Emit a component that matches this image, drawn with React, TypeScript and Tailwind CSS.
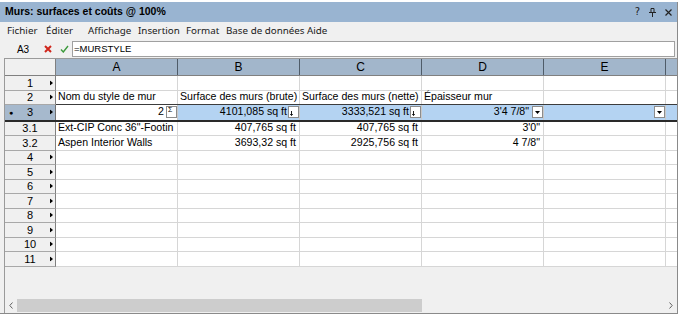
import React from "react";

type Row = {
  label: string;
  arrow: boolean;
  cells: string[];
  header?: boolean;
};

const ROWS: Row[] = [
  { label: "1", arrow: true, cells: ["", "", "", "", ""] },
  {
    label: "2",
    arrow: true,
    header: true,
    cells: ["Nom du style de mur", "Surface des murs (brute)", "Surface des murs (nette)", "Épaisseur mur", ""],
  },
  { label: "3", arrow: true, cells: [] },
  { label: "3.1", arrow: false, cells: ['Ext-CIP Conc 36"-Footin', "407,765 sq ft", "407,765 sq ft", "3'0\"", ""] },
  { label: "3.2", arrow: false, cells: ["Aspen Interior Walls", "3693,32 sq ft", "2925,756 sq ft", '4 7/8"', ""] },
  ...["4", "5", "6", "7", "8", "9", "10", "11"].map((n) => ({ label: n, arrow: true, cells: ["", "", "", "", ""] })),
];

const MENU = [
  { label: "Fichier", w: "w-[39px]" },
  { label: "Éditer", w: "w-[42px]" },
  { label: "Affichage", w: "w-[50px]" },
  { label: "Insertion", w: "w-[48px]" },
  { label: "Format", w: "w-[40px]" },
  { label: "Base de données", w: "w-[81px]" },
  { label: "Aide", w: "w-[30px]" },
];

function RowArrow() {
  return (
    <svg width="3" height="5" viewBox="0 0 3 5" className="absolute right-[2px] top-1/2 -translate-y-1/2">
      <path d="M0 0 L3 2.5 L0 5 Z" fill="#000" />
    </svg>
  );
}

function DropBox() {
  return (
    <div className="w-[11px] h-[12px] bg-white border border-[#8c8c8c] flex items-center justify-center shrink-0">
      <svg width="5" height="3" viewBox="0 0 5 3">
        <path d="M0 0 H5 L2.5 3 Z" fill="#000" />
      </svg>
    </div>
  );
}

function SumBox({ glyph }: { glyph: "sigma" | "down" }) {
  return (
    <div className="w-[11px] h-[12px] bg-white border border-[#8c8c8c] relative shrink-0">
      {glyph === "sigma" ? (
        <span className="absolute left-[1px] top-[-1px] text-[7px] leading-none">Σ</span>
      ) : (
        <svg width="3" height="5" viewBox="0 0 3 5" className="absolute left-[1px] bottom-[1px]">
          <path d="M1.5 0 V4 M0.3 3 L1.5 4.6 L2.7 3" stroke="#000" strokeWidth="0.9" fill="none" />
        </svg>
      )}
    </div>
  );
}

function SummaryRow() {
  return (
    <div className="flex h-[14.5px] border-t border-[#3c3c3c] border-b-2 border-b-[#2a2a2a] box-content -mt-px text-[10.6px]">
      <div className="w-[51px] shrink-0 relative bg-[#a6b9cd] border-r border-[#707070] flex items-center justify-center text-[11px]">
        <span className="absolute left-[4px] top-1/2 -translate-y-1/2 text-[7px] leading-none">●</span>
        3
        <RowArrow />
      </div>
      <div className="w-[122px] shrink-0 bg-white border-r border-[#c8c8c8] flex items-center justify-end gap-[2px]">
        <span>2</span>
        <SumBox glyph="sigma" />
      </div>
      <div className="w-[122px] shrink-0 bg-[#b4d3f2] border-r border-[#c8c8c8] flex items-center justify-end gap-[1px]">
        <span>4101,085 sq ft</span>
        <SumBox glyph="down" />
      </div>
      <div className="w-[122px] shrink-0 bg-[#b4d3f2] border-r border-[#c8c8c8] flex items-center justify-end gap-[1px]">
        <span>3333,521 sq ft</span>
        <SumBox glyph="down" />
      </div>
      <div className="w-[122px] shrink-0 bg-[#b4d3f2] border-r border-[#c8c8c8] flex items-center justify-end gap-[3px]">
        <span>3'4 7/8"</span>
        <DropBox />
      </div>
      <div className="w-[122px] shrink-0 bg-[#b4d3f2] border-r border-[#c8c8c8] flex items-center justify-end">
        <DropBox />
      </div>
      <div className="flex-1 bg-[#b4d3f2]" />
    </div>
  );
}

function DataRow({ row }: { row: Row }) {
  return (
    <div className="flex h-[14.5px] border-b border-[#d6d6d6]">
      <div className="w-[51px] shrink-0 relative bg-[#f0f0f0] border-r border-[#808080] border-b border-b-[#a8a8a8] -mb-px flex items-center justify-center text-[11px]">
        {row.label}
        {row.arrow && <RowArrow />}
      </div>
      {[0, 1, 2, 3, 4].map((i) => {
        const text = row.cells[i] ?? "";
        const left = row.header || i === 0;
        return (
          <div
            key={i}
            className={`w-[122px] shrink-0 bg-white border-r border-[#d6d6d6] flex items-center whitespace-nowrap text-[10.6px] ${
              left ? "justify-start pl-[2px]" : "justify-end pr-[3px]"
            }`}
          >
            {text}
          </div>
        );
      })}
      <div className="flex-1 bg-white" />
    </div>
  );
}

export default function App() {
  return (
    <div className="w-[680px] h-[317px] bg-white pt-[2px] pr-[2px] pb-[3px] font-['Liberation_Sans',Arial,sans-serif] text-black overflow-hidden">
      <div className="h-full flex flex-col bg-[#f0f0f0] border-r border-b border-[#8a8a8a]">
        {/* Title bar */}
        <div className="h-[20px] shrink-0 bg-[#99b4d1] flex items-center justify-between pl-[5px] pr-[5px]">
          <span className="font-bold text-[10.5px]">Murs: surfaces et coûts @ 100%</span>
          <div className="flex items-center gap-[9px] text-[#222]">
            <span className="text-[10px] leading-none font-['DejaVu_Sans',sans-serif]">?</span>
            <svg width="7" height="9" viewBox="0 0 7 9">
              <path d="M2 0.5 H5 V4.5 H2 Z M0 4.5 H7 M3.5 4.5 V9" stroke="#222" strokeWidth="1" fill="none" />
            </svg>
            <svg width="7" height="7" viewBox="0 0 7 7">
              <path d="M0.5 0.5 L6.5 6.5 M6.5 0.5 L0.5 6.5" stroke="#222" strokeWidth="1.2" />
            </svg>
          </div>
        </div>

        {/* Menu bar */}
        <div className="h-[18px] shrink-0 flex items-center pl-[7px] text-[9.8px] text-[#1a1a1a] font-['Noto_Sans',sans-serif]">
          {MENU.map((m) => (
            <span key={m.label} className={`${m.w} shrink-0 whitespace-nowrap`}>
              {m.label}
            </span>
          ))}
        </div>

        {/* Formula bar */}
        <div className="h-[18px] shrink-0 flex items-center">
          <span className="w-[42px] text-center text-[10px] pl-[4px]">A3</span>
          <svg width="8" height="8" viewBox="0 0 8 8" className="ml-[2px]">
            <path d="M1 1 L7 7 M7 1 L1 7" stroke="#d0261c" strokeWidth="2" />
          </svg>
          <svg width="9" height="8" viewBox="0 0 9 8" className="ml-[8px]">
            <path d="M1 4.5 L3.3 7 L8 1" stroke="#3c9a3c" strokeWidth="1.4" fill="none" />
          </svg>
          <div className="ml-[3px] mr-[2px] flex-1 h-[16px] bg-white border border-[#a0a0a0] flex items-center pl-[1px] text-[9.5px]">
            =MURSTYLE
          </div>
        </div>

        {/* Sheet */}
        <div className="flex-1 flex flex-col ml-[4px] border-l border-t border-[#9a9a9a]">
          {/* column headers */}
          <div className="flex h-[17px] shrink-0 border-b border-[#808080]">
            <div className="w-[51px] shrink-0 bg-[#f0f0f0] border-r border-[#808080]" />
            {["A", "B", "C", "D", "E"].map((c) => (
              <div
                key={c}
                className="w-[122px] shrink-0 bg-[#a2b6cb] border-r border-[#4f5c69] flex items-center justify-center text-[12px]"
              >
                {c}
              </div>
            ))}
            <div className="flex-1 bg-[#a2b6cb]" />
          </div>

          {ROWS.map((r) => (r.label === "3" ? <SummaryRow key={r.label} /> : <DataRow key={r.label} row={r} />))}

          <div className="flex-1" />

          {/* horizontal scrollbar */}
          <div className="h-[14px] shrink-0 flex items-center mb-[1px]">
            <div className="w-[12px] h-full flex items-center justify-center">
              <svg width="4" height="7" viewBox="0 0 4 7">
                <path d="M3.5 0.5 L0.8 3.5 L3.5 6.5" stroke="#606060" strokeWidth="1" fill="none" />
              </svg>
            </div>
            <div className="w-[405px] h-[13px] bg-[#cdcdcd]" />
            <div className="flex-1" />
            <div className="w-[12px] h-full flex items-center justify-center">
              <svg width="4" height="7" viewBox="0 0 4 7">
                <path d="M0.5 0.5 L3.2 3.5 L0.5 6.5" stroke="#606060" strokeWidth="1" fill="none" />
              </svg>
            </div>
          </div>
        </div>
      </div>
    </div>
  );
}
